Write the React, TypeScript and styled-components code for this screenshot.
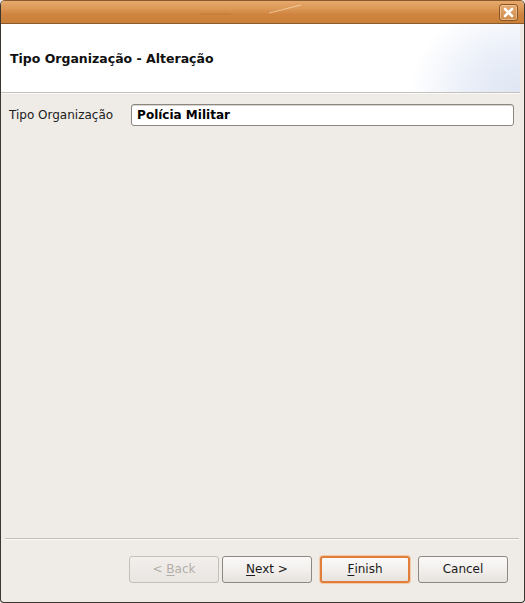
import React from "react";
import styled, { createGlobalStyle } from "styled-components";

const Global = createGlobalStyle`
  html, body { margin: 0; padding: 0; background: #efebe7; }
  body { font-family: "DejaVu Sans", "Liberation Sans", sans-serif; font-size: 12px; color: #101010; }
  #root { width: 525px; height: 603px; }
`;

const Window = styled.div`
  width: 525px;
  height: 603px;
  box-sizing: border-box;
  display: flex;
  flex-direction: column;
  background: #efebe7;
  border-radius: 5px 5px 4px 4px;
  overflow: hidden;
  border: 1px solid #3c3630;
  border-top-color: #8a5a2c;
`;

const TitleBar = styled.div`
  height: 22px;
  flex: none;
  position: relative;
  display: flex;
  align-items: center;
  justify-content: flex-end;
  padding-right: 6px;
  background: linear-gradient(#e6a86c 0%, #dc9856 35%, #cf8540 60%, #c98038 100%);
  border-bottom: 1px solid #8a5a2c;
  overflow: hidden;
`;

const Glint = styled.svg`
  position: absolute;
  left: 0;
  top: 0;
`;

const CloseButton = styled.div`
  width: 19px;
  height: 17px;
  box-sizing: border-box;
  border: 1px solid #8a5626;
  border-radius: 3px;
  background: linear-gradient(#e5aa72, #cf8b4a);
  box-shadow: inset 0 0 0 1px rgba(255, 220, 180, 0.5);
  display: flex;
  align-items: center;
  justify-content: center;
  position: relative;
  z-index: 1;
`;

const Header = styled.div`
  height: 69px;
  flex: none;
  box-sizing: border-box;
  background:
    radial-gradient(ellipse 110px 90px at 100% 100%, #dfe6f3 0%, #e9eef8 45%, rgba(255,255,255,0) 100%),
    #ffffff;
  border-bottom: 1px solid #c4c0bc;
  margin: 0 4px 0 0;
  display: flex;
  align-items: center;
  padding-left: 9px;
  padding-top: 1px;
`;

const HeaderTitle = styled.div`
  font-weight: bold;
  font-size: 12.5px;
`;

const HeaderRule = styled.div`
  height: 1px;
  background: #fbfaf9;
  margin-right: 4px;
  flex: none;
`;

const Body = styled.div`
  flex: 1;
  padding: 10px 10px 0 8px;
`;

const FieldRow = styled.div`
  display: flex;
  align-items: center;
  gap: 18px;
`;

const Label = styled.span`
  font-size: 12px;
  color: #202020;
  white-space: nowrap;
`;

const Input = styled.div`
  flex: 1;
  height: 22px;
  box-sizing: border-box;
  border: 1px solid #8b8680;
  border-radius: 3px;
  background: #ffffff;
  box-shadow: inset 0 1px 0 #d8d4d0;
  display: flex;
  align-items: center;
  padding-left: 5px;
  font-weight: bold;
  font-size: 12px;
  color: #000;
`;

const Separator = styled.div`
  height: 1px;
  margin: 0 5px 0 4px;
  background: #c2beba;
  border-bottom: 1px solid #faf9f8;
  flex: none;
`;

const ButtonRow = styled.div`
  flex: none;
  height: 62px;
  display: flex;
  align-items: flex-start;
  justify-content: flex-end;
  padding: 16px 16px 0 0;
  box-sizing: border-box;
`;

const ButtonGroup = styled.div`
  display: flex;
  gap: 3px;
  margin-right: 8px;
`;

const Button = styled.div<{ $disabled?: boolean; $default?: boolean }>`
  width: 90px;
  height: 27px;
  box-sizing: border-box;
  border-radius: 3px;
  display: flex;
  align-items: center;
  justify-content: center;
  padding-bottom: 1px;
  font-size: 12px;
  color: ${(p) => (p.$disabled ? "#b3aea9" : "#1a1a1a")};
  border: ${(p) =>
    p.$default ? "2px solid #e07f3c" : p.$disabled ? "1px solid #c4bfba" : "1px solid #8d8882"};
  background: ${(p) =>
    p.$disabled
      ? "linear-gradient(#f2efec, #e9e5e1)"
      : "linear-gradient(#fbfaf9 0%, #f1eeeb 55%, #e6e2de 100%)"};
  box-shadow: ${(p) => (p.$default ? "0 0 0 1px #f3c9a6" : "none")};
`;

const Mn = styled.span`
  text-decoration: underline;
  text-underline-offset: 2px;
`;

export default function App() {
  return (
    <>
      <Global />
      <Window>
        <TitleBar>
          <Glint width="525" height="22" viewBox="0 0 525 22">
            <path d="M268 12 L300 4" stroke="rgba(255,230,200,0.6)" strokeWidth="1" />
            <path d="M200 13 L230 13" stroke="rgba(160,90,30,0.25)" strokeWidth="1" />
          </Glint>
          <CloseButton>
            <svg width="11" height="11" viewBox="0 0 11 11">
              <path d="M2 2 L9 9 M9 2 L2 9" stroke="#ffffff" strokeWidth="2.6" strokeLinecap="round" />
            </svg>
          </CloseButton>
        </TitleBar>
        <Header>
          <HeaderTitle>Tipo Organização - Alteração</HeaderTitle>
        </Header>
        <HeaderRule />
        <Body>
          <FieldRow>
            <Label>Tipo Organização</Label>
            <Input>Polícia Militar</Input>
          </FieldRow>
        </Body>
        <Separator />
        <ButtonRow>
          <ButtonGroup>
            <Button $disabled>
              &lt;&nbsp;<Mn>B</Mn>ack
            </Button>
            <Button>
              <Mn>N</Mn>ext &gt;
            </Button>
          </ButtonGroup>
          <ButtonGroup>
            <Button $default>
              <Mn>F</Mn>inish
            </Button>
          </ButtonGroup>
          <Button>Cancel</Button>
        </ButtonRow>
      </Window>
    </>
  );
}
